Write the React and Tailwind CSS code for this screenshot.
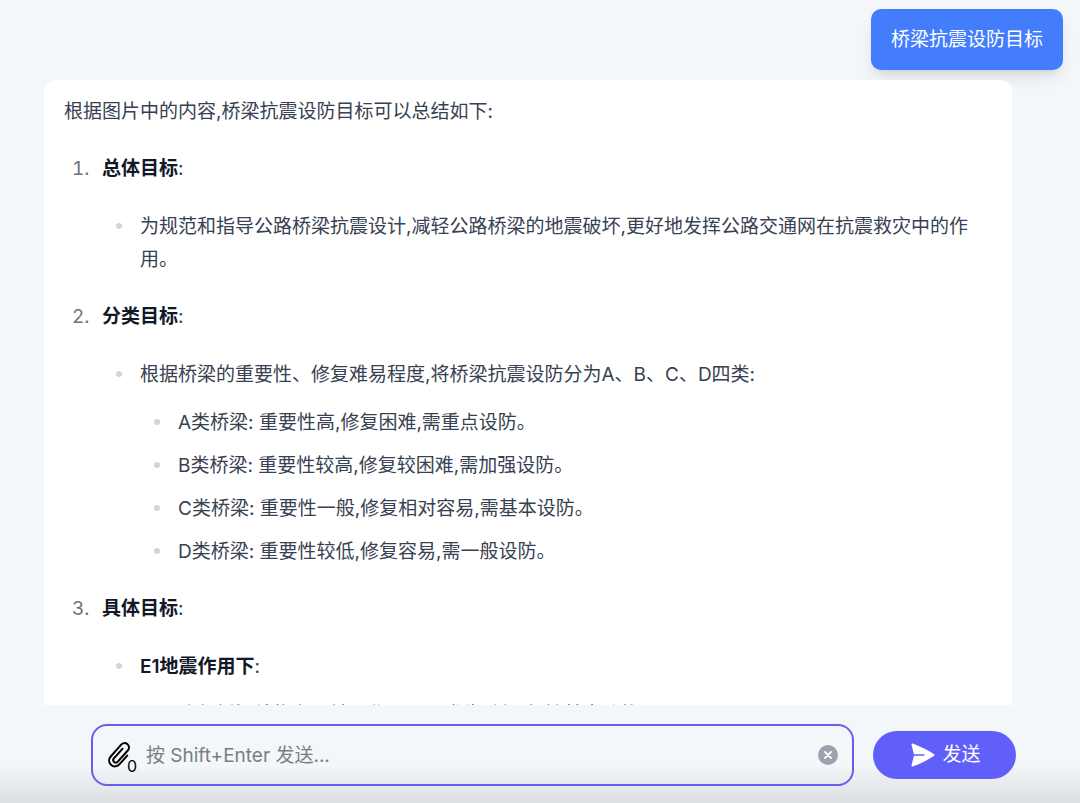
import React, { useState } from 'react';

const sections = [
  {
    title: '总体目标',
    items: [
      {
        text: '为规范和指导公路桥梁抗震设计,减轻公路桥梁的地震破坏,更好地发挥公路交通网在抗震救灾中的作用。',
      },
    ],
  },
  {
    title: '分类目标',
    items: [
      {
        text: '根据桥梁的重要性、修复难易程度,将桥梁抗震设防分为A、B、C、D四类:',
        children: [
          'A类桥梁: 重要性高,修复困难,需重点设防。',
          'B类桥梁: 重要性较高,修复较困难,需加强设防。',
          'C类桥梁: 重要性一般,修复相对容易,需基本设防。',
          'D类桥梁: 重要性较低,修复容易,需一般设防。',
        ],
      },
    ],
  },
  {
    title: '具体目标',
    items: [
      {
        strong: 'E1地震作用下',
        text: ':',
        children: ['确保桥梁结构在E1地震作用下不发生破坏,保持基本功能。'],
      },
    ],
  },
];

function Bullet() {
  return (
    <span className="flex h-8 w-[38px] shrink-0 items-center pl-[14px]">
      <span className="h-[6px] w-[6px] rounded-full bg-[#d1d5db]" />
    </span>
  );
}

function PaperclipIcon() {
  return (
    <svg viewBox="0 0 24 28" className="h-7 w-6" fill="none" stroke="currentColor" strokeWidth="2" strokeLinecap="round" strokeLinejoin="round">
      <path d="M20.2 14.6 12.6 23.2C10.4 25.7 6.8 26.2 4.2 23.9C1.6 21.6 1.5 18 3.7 15.5L14.2 3.7C15.9 1.8 18.6 1.6 20.5 3.2C22.4 4.9 22.5 7.6 20.8 9.5L10.8 20.7C9.8 21.8 8.2 21.9 7.1 21C6 20 5.9 18.4 6.9 17.3L15.4 7.8" />
    </svg>
  );
}

function SendIcon() {
  return (
    <svg viewBox="0 0 24 24" className="h-6 w-6" fill="currentColor">
      <path d="M0.5 1.4C0.3 0.6 0.9 0.2 1.6 0.5C9 3.2 16.5 6.6 23.1 11.2C23.8 11.7 23.8 12.3 23.1 12.8C16.5 17.4 9 20.8 1.6 23.5C0.9 23.8 0.3 23.4 0.5 22.6L2.9 12.8H13.4V11.2H2.9Z" />
    </svg>
  );
}

function Answer() {
  return (
    <article className="min-h-0 flex-1 overflow-hidden rounded-t-xl bg-white pl-5 pr-[38px] pt-[15px] leading-[33px] text-[#374151]">
      <p>根据图片中的内容,桥梁抗震设防目标可以总结如下:</p>
      <ol className="mt-6">
        {sections.map((section, i) => (
          <li key={section.title} className="mb-6 flex">
            <span className="w-[38px] shrink-0 pl-2 tabular-nums text-[#6b7280]">{i + 1}.</span>
            <div className="flex-1">
              <p>
                <strong className="font-semibold text-[#111827]">{section.title}</strong>:
              </p>
              <ul className="mt-[25px]">
                {section.items.map((item) => (
                  <li key={item.text} className="flex">
                    <Bullet />
                    <div className="flex-1">
                      <p>
                        {item.strong && <strong className="font-semibold text-[#111827]">{item.strong}</strong>}
                        {item.text}
                      </p>
                      {item.children && (
                        <ul className="mt-[15px] flex flex-col gap-[10px]">
                          {item.children.map((child) => (
                            <li key={child} className="flex">
                              <Bullet />
                              <p className="flex-1">{child}</p>
                            </li>
                          ))}
                        </ul>
                      )}
                    </div>
                  </li>
                ))}
              </ul>
            </div>
          </li>
        ))}
      </ol>
    </article>
  );
}

function Composer() {
  const [message, setMessage] = useState('');

  return (
    <form className="flex items-center gap-[19px] pl-[91px] pr-16 pt-[19px] pb-[17px]" onSubmit={(e) => e.preventDefault()}>
      <div className="flex h-[62px] min-w-0 flex-1 items-center rounded-2xl border-2 border-[#6360f0] px-[14px]">
        <button type="button" aria-label="附件" className="flex shrink-0 items-end text-black">
          <PaperclipIcon />
          <span className="-mb-[5px] -ml-1 w-[9px] text-base leading-4">0</span>
        </button>
        <input
          type="text"
          aria-label="消息"
          placeholder="按 Shift+Enter 发送..."
          value={message}
          onChange={(e) => setMessage(e.target.value)}
          className="ml-[10px] h-10 min-w-0 flex-1 bg-transparent outline-none placeholder:text-[#7b7d80]"
        />
        <button
          type="button"
          aria-label="清空"
          onClick={() => setMessage('')}
          className="flex h-5 w-5 shrink-0 items-center justify-center rounded-full bg-[#9ca3af] text-white"
        >
          <svg viewBox="0 0 8 8" className="h-2 w-2" stroke="currentColor" strokeWidth="1.8" strokeLinecap="round">
            <path d="M1 1 7 7M7 1 1 7" />
          </svg>
        </button>
      </div>
      <button type="submit" className="flex h-12 w-[143px] shrink-0 items-center justify-center gap-[7px] rounded-full bg-[#615ffa] pl-[3px] text-white">
        <SendIcon />
        发送
      </button>
    </form>
  );
}

export default function App() {
  return (
    <div className="flex h-screen flex-col overflow-hidden bg-[#f3f7fa] bg-linear-to-t from-[#dcdfe2] to-[#f3f7fa] to-[38px] font-[Inter,'Noto_Sans_CJK_SC',sans-serif] text-[19px]">
      <main className="flex min-h-0 flex-1 flex-col">
        <div className="flex justify-end pt-[9px] pr-[17px] pb-[10px]">
          <p className="rounded-[10px] bg-[#447dfc] px-5 py-[14px] leading-[33px] text-white shadow-lg">桥梁抗震设防目标</p>
        </div>
        <div className="flex min-h-0 flex-1 flex-col pl-11 pr-[68px]">
          <Answer />
        </div>
      </main>
      <Composer />
    </div>
  );
}
